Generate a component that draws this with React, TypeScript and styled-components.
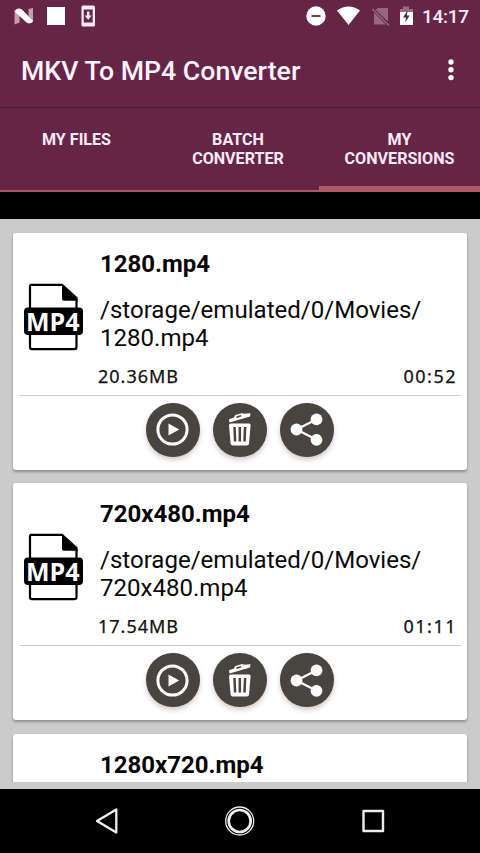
import React from "react";
import styled, { createGlobalStyle } from "styled-components";

const Global = createGlobalStyle`
  * { box-sizing: border-box; }
  body { margin: 0; background: #000; font-family: Roboto, sans-serif; }
  svg { display: block; flex: none; }
`;

const Screen = styled.div`
  width: 480px;
  height: 853px;
  display: flex;
  flex-direction: column;
  overflow: hidden;
  background: #000;
`;
const StatusBar = styled.div`
  height: 32px;
  flex: none;
  background: #652546;
`;
const AppBar = styled.header`
  height: 75px;
  flex: none;
  background: #652546;
  display: flex;
  align-items: center;
  justify-content: space-between;
  padding: 0 23px 0 21px;
`;
const Title = styled.h1`
  margin: 2px 0 0;
  font-size: 26.7px;
  line-height: 32px;
  font-weight: 500;
  color: #fff3fb;
  white-space: nowrap;
`;
const Tabs = styled.nav`
  height: 85px;
  flex: none;
  display: grid;
  grid-template-columns: 153px 166px 161px;
  background: #652546;
  border-top: 1px solid #501636;
`;
const Tab = styled.div<{ $active?: boolean; $left?: number }>`
  padding: 23px 0 0 ${(p) => p.$left ?? 0}px;
  border-bottom: ${(p) => (p.$active ? "6px solid #b05a68" : "2px solid #a9586c")};
  color: #ffeaf8;
  font-size: 16.1px;
  line-height: 18.7px;
  font-weight: 700;
  text-align: center;
`;
const Gap = styled.div`
  height: 27px;
  flex: none;
`;
const ListArea = styled.main`
  height: 570px;
  flex: none;
  background: #cbcbcb;
  padding-bottom: 7px;
`;
const List = styled.div`
  height: 563px;
  overflow: hidden;
  padding: 14px 13px 0 13px;
  display: flex;
  flex-direction: column;
  gap: 13.4px;
`;
const Card = styled.article`
  height: 237px;
  flex: none;
  background: #fff;
  border-radius: 3px;
  box-shadow: 0 2px 3px rgba(0, 0, 0, 0.3);
  padding: 0 6px 0 7px;
`;
const Details = styled.div`
  height: 134px;
  display: flex;
`;
const Thumb = styled.div`
  width: 80px;
  padding: 50px 0 0 3px;
`;
const Name = styled.div`
  padding-top: 17px;
  font-size: 24px;
  line-height: 28px;
  font-weight: 700;
  color: #050505;
`;
const Path = styled.div`
  padding-top: 18px;
  font-size: 24.05px;
  line-height: 28px;
  color: #080808;
  white-space: pre;
`;
const Meta = styled.div`
  height: 29px;
  display: flex;
  justify-content: space-between;
  padding: 0 4px 0 78px;
  border-bottom: 1px solid #c9c9c9;
  font-family: "Noto Sans", sans-serif;
  font-size: 18px;
  line-height: 18px;
  letter-spacing: 1px;
  color: #111;
  -webkit-text-stroke: 0.25px #111;
`;
const Time = styled.span`
  letter-spacing: 1.5px;
`;
const Actions = styled.div`
  display: flex;
  justify-content: center;
  gap: 13.3px;
  padding: 7px 1px 0 0;
`;
const ActionButton = styled.button`
  width: 53.5px;
  height: 53.5px;
  padding: 0;
  border: 0;
  border-radius: 50%;
  background: #484541;
  box-shadow: 0 3px 5px rgba(70, 45, 35, 0.24);
`;
const NavBar = styled.footer`
  height: 64px;
  flex: none;
  background: #000;
`;

const StatusIcons = () => (
  <svg width="480" height="32" viewBox="0 0 480 32">
    <path d="M14.500 9.500l5 3v10l-5 2zM28.500 9l4.500-1v14l-4.500 1z" fill="#c69aaf" />
    <path d="M16 9.500q3-2 6 0L33 21q-2 4-6.500 1.500L15 12z" fill="#fff" />
    <rect x="47" y="7" width="18" height="18" fill="#fff" />
    <rect x="81.500" y="5.500" width="13.500" height="21" rx="1.500" fill="#ffecf8" />
    <path d="M83.700 9.500h9v13h-9z" fill="#652546" />
    <path d="M87 11.500h2.400v4h2.400l-3.600 4.200-3.600-4.200H87z" fill="#ffecf8" />
    <circle cx="316" cy="16" r="9.700" fill="#fff" />
    <path d="M311.500 16h9" stroke="#694b5d" strokeWidth="2.200" />
    <path d="M337 10.500q11.500-8 23 0L348.500 25z" fill="#fff" />
    <path d="M378 8h10v13.500L375.500 9.800zM374 12.500l12 12h-12z" fill="#976681" />
    <path d="M372.500 9L389 25.500" stroke="#976681" strokeWidth="1.500" />
    <path d="M400 13V9h3V6.500h6V9h4v4z" fill="#9b6b84" />
    <path d="M400 12h13v13h-13z" fill="#fff" />
    <path d="M407.500 10.500l-4.500 7h3l-1 5 4.700-7h-2.800z" fill="#4f2a3e" />
    <text x="422" y="23" fontFamily="Roboto" fontSize="19" fontWeight="500" fill="#ffeaf7" textLength="47">14:17</text>
  </svg>
);

const Overflow = () => (
  <svg width="12" height="24" viewBox="0 0 12 24" fill="#fff">
    <circle cx="6" cy="4" r="2.700" />
    <circle cx="6" cy="11.800" r="2.700" />
    <circle cx="6" cy="19.600" r="2.700" />
  </svg>
);

const Mp4Icon = () => (
  <svg width="61" height="68" viewBox="0 0 61 68">
    <path d="M8 1.800h31L53.500 15v49q0 2.200-2.200 2.200H9Q7 66.200 7 64V3.500q0-1.700 1-1.700z" fill="#fff" stroke="#000" strokeWidth="2.200" />
    <path d="M39 1.500L54.500 16v1.800H41q-2 0-2-2z" fill="#000" />
    <rect x="1" y="24.500" width="59" height="27.500" rx="4" fill="#000" />
    <text x="3" y="47.500" fontFamily="Open Sans" fontSize="25.500" fontWeight="700" fill="#fff" textLength="53.500" lengthAdjust="spacingAndGlyphs">MP4</text>
  </svg>
);

const PlayIcon = () => (
  <svg width="53" height="53" viewBox="0 0 53 53">
    <circle cx="26.500" cy="26.500" r="14.600" fill="none" stroke="#fff" strokeWidth="3" />
    <path d="M22.500 20.500v12L33.200 26.500z" fill="#fff" />
  </svg>
);

const TrashIcon = () => (
  <svg width="53" height="53" viewBox="0 0 53 53">
    <path d="M16 16.300l5-1.800 1.200-2.500 7.200-2 1.500.8 6.600-.5-.5 3.200L16.500 19.500z" fill="#fff" />
    <path d="M23.500 14.200l4.500-1.400" stroke="#484541" strokeWidth="1.500" />
    <path d="M18 20.500h18q1.700 0 1.600 1.700L36 40.500q-.2 2-2.200 2h-14q-2 0-2.200-2L16 22.200q0-1.700 2-1.700z" fill="#fff" />
    <path d="M21.500 24l.6 14.500M26.800 24v14.500M32.100 24l-.6 14.500" stroke="#484541" strokeWidth="2.500" />
  </svg>
);

const ShareIcon = () => (
  <svg width="53" height="53" viewBox="0 0 53 53" fill="#fff">
    <path d="M36.700 16.300L16.500 26.500l20.200 10.300" fill="none" stroke="#fff" strokeWidth="2.300" />
    <circle cx="36.500" cy="16.300" r="5.900" />
    <circle cx="16.500" cy="26.500" r="5.900" />
    <circle cx="36.500" cy="36.800" r="5.900" />
  </svg>
);

const NavIcons = () => (
  <svg width="480" height="64" viewBox="0 0 480 64" fill="none" stroke="#eee" strokeLinejoin="round">
    <path d="M116.300 20.500v23L97 32z" strokeWidth="2.300" />
    <circle cx="239.700" cy="32" r="14" strokeWidth="1.300" />
    <circle cx="239.700" cy="32" r="11" strokeWidth="2.700" />
    <rect x="363.500" y="22" width="19.500" height="20" strokeWidth="2.400" />
  </svg>
);

type Video = { file: string; size: string; time: string };

const videos: Video[] = [
  { file: "1280.mp4", size: "20.36MB", time: "00:52" },
  { file: "720x480.mp4", size: "17.54MB", time: "01:11" },
  { file: "1280x720.mp4", size: "", time: "" },
];

const VideoCard = ({ file, size, time }: Video) => (
  <Card>
    <Details>
      <Thumb>{size && <Mp4Icon />}</Thumb>
      <div>
        <Name>{file}</Name>
        {size && <Path>{"/storage/emulated/0/Movies/\n" + file}</Path>}
      </div>
    </Details>
    {size && (
      <>
        <Meta><span>{size}</span><Time>{time}</Time></Meta>
        <Actions>
          <ActionButton aria-label="Play"><PlayIcon /></ActionButton>
          <ActionButton aria-label="Delete"><TrashIcon /></ActionButton>
          <ActionButton aria-label="Share"><ShareIcon /></ActionButton>
        </Actions>
      </>
    )}
  </Card>
);

export default function App() {
  return (
    <Screen>
      <Global />
      <StatusBar><StatusIcons /></StatusBar>
      <AppBar><Title>MKV To MP4 Converter</Title><Overflow /></AppBar>
      <Tabs>
        <Tab>MY FILES</Tab>
        <Tab $left={4}>BATCH<br />CONVERTER</Tab>
        <Tab $active>MY<br />CONVERSIONS</Tab>
      </Tabs>
      <Gap />
      <ListArea>
        <List>{videos.map((v) => <VideoCard key={v.file} {...v} />)}</List>
      </ListArea>
      <NavBar><NavIcons /></NavBar>
    </Screen>
  );
}
